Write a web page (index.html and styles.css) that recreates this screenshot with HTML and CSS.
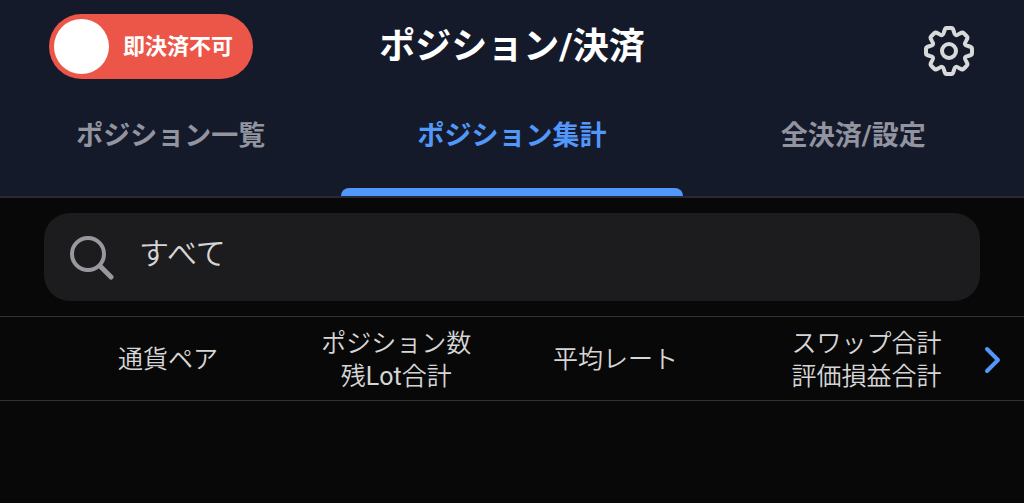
FILE: index.html
```html
<!DOCTYPE html>
<html lang="ja">
<head>
    <meta charset="UTF-8">
    <meta name="viewport" content="width=device-width, initial-scale=1">
    <title>ポジション/決済</title>
    <link rel="stylesheet" href="styles.css">
</head>
<body>
    <header class="header">
        <div class="topbar">
            <label class="toggle">
                <input type="checkbox" class="toggle-input">
                <span class="toggle-knob"></span>
                <span class="toggle-text">即決済不可</span>
            </label>
            <h1 class="title">ポジション/決済</h1>
            <button type="button" class="settings" aria-label="設定">
                <svg width="52" height="52" viewBox="-26 -26 52 52" fill="none" stroke="currentColor" stroke-width="4" stroke-linejoin="round">
                    <path d="M-5 -19 L-4 -22 Q-3.6 -23 -2.5 -23 L2.5 -23 Q3.6 -23 4 -22 L5 -19 Q5.8 -14 9.9 -17
                             L12.7 -18.4 Q13.8 -18.8 14.5 -18 L18 -14.5 Q18.8 -13.8 18.4 -12.7 L17 -9.9 Q14 -5.8 19 -5
                             L22 -4 Q23 -3.6 23 -2.5 L23 2.5 Q23 3.6 22 4 L19 5 Q14 5.8 17 9.9
                             L18.4 12.7 Q18.8 13.8 18 14.5 L14.5 18 Q13.8 18.8 12.7 18.4 L9.9 17 Q5.8 14 5 19
                             L4 22 Q3.6 23 2.5 23 L-2.5 23 Q-3.6 23 -4 22 L-5 19 Q-5.8 14 -9.9 17
                             L-12.7 18.4 Q-13.8 18.8 -14.5 18 L-18 14.5 Q-18.8 13.8 -18.4 12.7 L-17 9.9 Q-14 5.8 -19 5
                             L-22 4 Q-23 3.6 -23 2.5 L-23 -2.5 Q-23 -3.6 -22 -4 L-19 -5 Q-14 -5.8 -17 -9.9
                             L-18.4 -12.7 Q-18.8 -13.8 -18 -14.5 L-14.5 -18 Q-13.8 -18.8 -12.7 -18.4 L-9.9 -17 Q-5.8 -14 -5 -19 Z"/>
                    <circle r="7"/>
                </svg>
            </button>
        </div>
        <nav class="tabs">
            <a href="#list" class="tab">ポジション一覧</a>
            <a href="#summary" class="tab active" aria-current="page">ポジション集計</a>
            <a href="#settings" class="tab">全決済/設定</a>
        </nav>
    </header>

    <main>
        <label class="search">
            <svg class="search-icon" width="46" height="46" viewBox="0 0 46 46" fill="none" stroke="currentColor" stroke-linecap="round">
                <circle cx="19" cy="20" r="16" stroke-width="4"/>
                <path d="M31 32 L42 43" stroke-width="5"/>
            </svg>
            <input type="text" class="search-input" value="すべて" aria-label="通貨ペア検索">
        </label>

        <table class="summary">
            <thead>
                <tr>
                    <th class="col-pair">通貨ペア</th>
                    <th class="col-count">ポジション数<br>残<span class="latin">Lot</span>合計</th>
                    <th class="col-rate">平均レート</th>
                    <th class="col-total">スワップ合計<br>評価損益合計</th>
                    <th class="col-next">
                        <button type="button" class="next" aria-label="次へ">
                            <svg width="20" height="30" viewBox="0 0 20 30" fill="none" stroke="currentColor" stroke-width="4" stroke-linecap="round" stroke-linejoin="round">
                                <path d="M5 4 L16 15 L5 26"/>
                            </svg>
                        </button>
                    </th>
                </tr>
            </thead>
        </table>
    </main>
</body>
</html>
```

FILE: styles.css
```css
* {
    box-sizing: border-box;
}

body {
    margin: 0;
    background-color: #080808;
    color: #d6d6d6;
    font-family: Roboto, "Noto Sans CJK JP", sans-serif;
}

button {
    display: flex;
    padding: 0;
    border: none;
    background: none;
    cursor: pointer;
}

.header {
    background-color: #151a2b;
    border-bottom: 2px solid #272935;
}

.topbar {
    display: grid;
    grid-template-columns: 1fr auto 1fr;
    align-items: center;
    padding: 14px 49px 0;
}

/* Instant settlement switch */
.toggle {
    display: flex;
    align-items: center;
    justify-self: start;
    gap: 14px;
    padding: 5px 20px 5px 5px;
    border-radius: 33px;
    background-color: #ec5648;
    color: #fff;
    cursor: pointer;
}

.toggle-input {
    position: absolute;
    opacity: 0;
}

.toggle-knob {
    width: 55px;
    height: 55px;
    border-radius: 50%;
    background-color: #fff;
}

.toggle-text {
    font-size: 22px;
    line-height: 32px;
    font-weight: 700;
}

.title {
    margin: 0;
    color: #fff;
    font-size: 36px;
    line-height: 52px;
    font-weight: 700;
}

.settings {
    align-self: end;
    justify-self: end;
    padding-bottom: 2px;
    color: #d8dad9;
}

.tabs {
    display: grid;
    grid-template-columns: repeat(3, 1fr);
}

.tab {
    padding-top: 37px;
    color: #9294a0;
    font-size: 27px;
    line-height: 40px;
    font-weight: 700;
    text-align: center;
    text-decoration: none;
}

.tab::after {
    content: "";
    display: block;
    height: 8px;
    margin-top: 32px;
    border-radius: 8px 8px 0 0;
}

.tab.active {
    color: #5297fa;
}

.tab.active::after {
    background-color: #5297fa;
}

.search {
    display: flex;
    align-items: center;
    gap: 24px;
    height: 88px;
    margin: 15px 44px;
    padding: 0 25px;
    border-radius: 26px;
    background-color: #1c1c1e;
}

.search-icon {
    flex: none;
    color: #98999f;
}

.search-input {
    flex: 1;
    min-width: 0;
    padding: 0 0 6px;
    border: none;
    outline: none;
    background: none;
    color: #d6d6d6;
    font-family: inherit;
    font-size: 30px;
    font-weight: 350;
    line-height: 40px;
}

.summary {
    width: 100%;
    table-layout: fixed;
    border-collapse: collapse;
    border-top: 1px solid #333;
    border-bottom: 1px solid #333;
}

.summary th {
    height: 84px;
    padding: 2px 0 0;
    font-size: 25px;
    line-height: 33px;
    font-weight: 350;
    white-space: nowrap;
}

.summary .col-pair {
    width: 29.5%;
    padding-left: 34px;
}

.col-count {
    width: 18.4%;
}

.col-rate {
    width: 24.4%;
}

.summary .col-total {
    width: 21.5%;
    padding-left: 32px;
}

.latin {
    font-weight: 400;
}

.next {
    margin: 0 auto;
    color: #5297fa;
}
```
